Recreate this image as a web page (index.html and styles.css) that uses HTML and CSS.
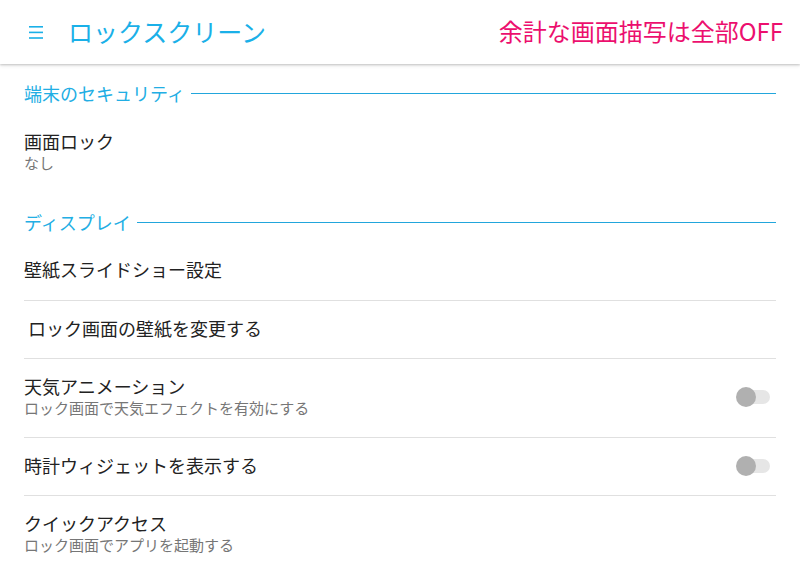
FILE: index.html
```html
<!DOCTYPE html>
<html lang="ja">
<head>
<meta charset="utf-8">
<title>ロックスクリーン</title>
<link rel="stylesheet" href="styles.css">
</head>
<body>
<header class="appbar">
  <div class="appbar-left">
    <svg class="menu-icon" width="16" height="16" viewBox="0 0 16 16" aria-hidden="true">
      <rect x="1" y="2" width="14" height="1.6" fill="#1ab0e8"/>
      <rect x="1" y="7.6" width="14" height="1.6" fill="#1ab0e8"/>
      <rect x="1" y="13.2" width="14" height="1.6" fill="#1ab0e8"/>
    </svg>
    <h1 class="appbar-title">ロックスクリーン</h1>
  </div>
  <div class="appbar-note">余計な画面描写は全部OFF</div>
</header>
<main class="content">
  <section class="group">
    <h2 class="group-title"><span>端末のセキュリティ</span></h2>
    <div class="item two-line">
      <div class="item-text">
        <div class="item-title">画面ロック</div>
        <div class="item-sub">なし</div>
      </div>
    </div>
  </section>
  <section class="group">
    <h2 class="group-title"><span>ディスプレイ</span></h2>
    <div class="item">
      <div class="item-text"><div class="item-title">壁紙スライドショー設定</div></div>
    </div>
    <div class="item divided">
      <div class="item-text indent"><div class="item-title">ロック画面の壁紙を変更する</div></div>
    </div>
    <div class="item two-line divided">
      <div class="item-text">
        <div class="item-title">天気アニメーション</div>
        <div class="item-sub">ロック画面で天気エフェクトを有効にする</div>
      </div>
      <div class="switch"><span class="track"></span><span class="thumb"></span></div>
    </div>
    <div class="item divided">
      <div class="item-text"><div class="item-title">時計ウィジェットを表示する</div></div>
      <div class="switch"><span class="track"></span><span class="thumb"></span></div>
    </div>
    <div class="item two-line divided">
      <div class="item-text">
        <div class="item-title">クイックアクセス</div>
        <div class="item-sub">ロック画面でアプリを起動する</div>
      </div>
    </div>
  </section>
</main>
</body>
</html>
```
FILE: styles.css
```css
* { box-sizing: border-box; }
html, body { margin: 0; padding: 0; }
body {
  width: 800px;
  height: 578px;
  overflow: hidden;
  background: #ffffff;
  font-family: "Noto Sans CJK JP", "Noto Sans", sans-serif;
  color: #222222;
}
.appbar {
  height: 64px;
  display: flex;
  align-items: center;
  justify-content: space-between;
  padding: 0 17px 0 28px;
  background: #ffffff;
  box-shadow: 0 1px 2px rgba(0,0,0,0.18), 0 2px 4px rgba(0,0,0,0.08);
  position: relative;
  z-index: 1;
}
.appbar-left { display: flex; align-items: center; }
.menu-icon { display: block; margin-right: 24px; margin-top: 0; }
.appbar-title {
  margin: 0 0 2px;
  font-size: 25px;
  font-weight: 400;
  line-height: 32px;
  color: #1ab0e8;
}
.appbar-note {
  font-size: 24px;
  line-height: 32px;
  color: #ec0f6e;
  margin-top: -2px;
}
.content { padding: 0 24px; }
.group-title {
  margin: 17px 0 8px;
  font-size: 18px;
  font-weight: 400;
  line-height: 24px;
  color: #22aee4;
  display: flex;
  align-items: center;
}
.group + .group .group-title { margin-top: 18px; }
.group-title::after {
  content: "";
  flex: 1;
  height: 1px;
  background: #22a6dc;
  margin-left: 6px;
  margin-top: 0;
}
.item {
  display: flex;
  align-items: center;
  justify-content: space-between;
  height: 58px;
}
.item.two-line { height: 79px; }
.item.divided { border-top: 1px solid #e0e0e0; }
.item-text { padding-bottom: 4px; }
.item-text.indent { padding-left: 4px; }
.item-title { font-size: 18px; line-height: 24px; color: #222222; }
.item-sub { font-size: 15px; line-height: 20px; color: #767676; }
.switch {
  position: relative;
  width: 36px;
  height: 20px;
  margin-right: 6px;
  margin-bottom: 2px;
}
.track {
  position: absolute;
  left: 10px;
  top: 3px;
  width: 26px;
  height: 14px;
  border-radius: 7px;
  background: #e6e6e6;
}
.thumb {
  position: absolute;
  left: 2px;
  top: 0;
  width: 20px;
  height: 20px;
  border-radius: 50%;
  background: #b0b0b0;
}
```
